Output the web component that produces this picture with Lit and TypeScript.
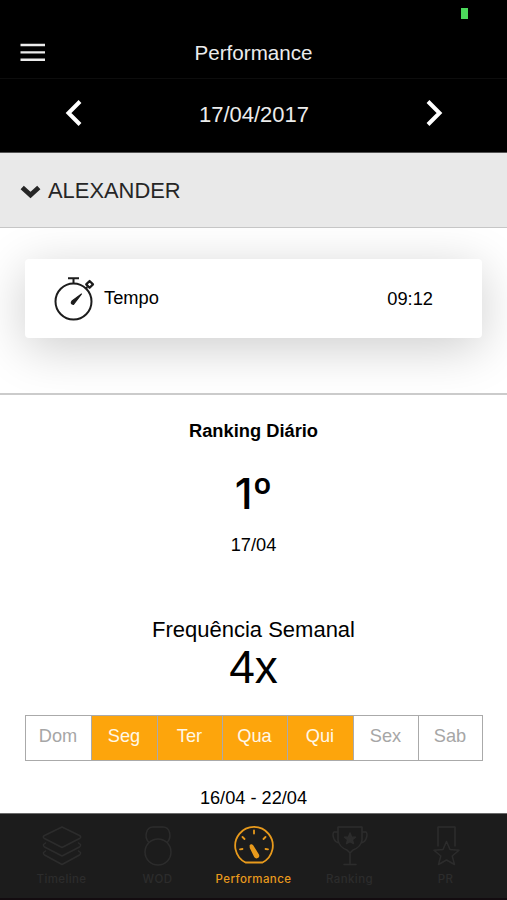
import { LitElement, html, css, svg } from "lit";
import { customElement, property } from "lit/decorators.js";
import { classMap } from "lit/directives/class-map.js";

const icons: Record<string, unknown> = {
  timeline: svg`<path d="M21 2 L38.500 10.500 Q41 12 38.500 13.500 L21 22.500 L3.500 13.500 Q1 12 3.500 10.500 Z"/>
    <path d="M4.500 18 L2.500 19.500 Q2 21 3.500 22 L21 31 L38.500 22 Q40 21 39.500 19.500 L37.500 18"/>
    <path d="M4.500 26 L2.500 27.500 Q2 29 3.500 30 L21 39.500 L38.500 30 Q40 29 39.500 27.500 L37.500 26"/>`,
  wod: svg`<path d="M11.500 17 C7 12 9 2 16 2 H26 C33 2 35 12 30.500 17"/>
    <circle cx="21" cy="27" r="13"/>`,
  performance: svg`<path d="M12.500 37.500 A18.800 18.800 0 1 1 29.500 37.500 Z"/>
    <path d="M21 5.500 V8.500 M9.500 12 L11.500 14 M32.500 12 L30.500 14 M7 24.300 L9.500 24 M35 24.300 L32.500 24"/>
    <path class="solid" d="M17.500 20.500 C18 19.800 19 20 19.600 21 L25.200 30 C26 32 23.300 33.500 22 31.500 L17.600 22.500 Z"/>`,
  ranking: svg`<path d="M9 2 H33 V15 Q32 22 24 25 L21 28 L18 25 Q10 22 9 15 Z M9 7 H5 Q3 9 5 14 Q6 17 10 18 M33 7 H37 Q39 9 37 14 Q36 17 32 18 M21 28 V39 M15 39.500 H27"/>
    <path class="solid" d="M21 8 L22.500 12 L26.500 12.200 L23.300 14.700 L24.400 18.500 L21 16.300 L17.600 18.500 L18.700 14.700 L15.500 12.200 L19.500 12 Z"/>`,
  pr: svg`<path d="M13 21 V2 H30 V21"/>
    <path d="M21.500 16.500 L25 24.500 L34 25.200 L27.200 31 L29.500 39.500 L21.500 35 L13.500 39.500 L15.800 31 L9 25.200 L18 24.500 Z"/>`,
};

@customElement("tab-item")
class TabItem extends LitElement {
  @property() icon = "";
  @property() label = "";
  @property({ type: Boolean, reflect: true }) active = false;

  static styles = css`
    :host {
      display: flex;
      flex-direction: column;
      align-items: center;
      flex: 0 0 96px;
      color: #2c2c2c;
    }
    :host([active]) { color: #e89a1c; }
    svg {
      width: 42px;
      height: 42px;
      fill: none;
      stroke: currentColor;
      stroke-width: 1.500;
      stroke-linejoin: round;
      stroke-linecap: round;
    }
    :host([active]) svg { stroke-width: 1.800; }
    .solid { fill: currentColor; }
    .label {
      font: 500 11.5px/16px Inter, sans-serif;
      letter-spacing: 0.4px;
      margin-top: 4px;
      white-space: nowrap;
    }
  `;

  render() {
    return html`<svg viewBox="0 0 42 42">${icons[this.icon]}</svg>
      <span class="label">${this.label}</span>`;
  }
}

@customElement("app-root")
class AppRoot extends LitElement {
  days = ["Dom", "Seg", "Ter", "Qua", "Qui", "Sex", "Sab"];
  trained = new Set(["Seg", "Ter", "Qua", "Qui"]);

  static styles = css`
    :host {
      display: flex;
      flex-direction: column;
      width: 507px;
      height: 900px;
      overflow: hidden;
      background: #fff;
      color: #000;
      font-family: "Liberation Sans", Arial, sans-serif;
    }
    * { box-sizing: border-box; }
    svg { display: block; flex: none; }
    .status {
      height: 26px;
      flex: none;
      background: #000;
      display: flex;
      justify-content: flex-end;
      padding: 8px 39px 0 0;
    }
    .battery { width: 7px; height: 11px; background: #4cd95c; }
    .title {
      height: 53px;
      flex: none;
      background: #000;
      border-bottom: 1px solid #0d0d0d;
      display: grid;
      grid-template-columns: 60px 1fr 60px;
      align-items: center;
      color: #ececec;
      font-size: 20.6px;
      text-align: center;
    }
    .title span { padding-top: 2px; }
    .menu { margin-left: 20px; }
    .date {
      height: 74px;
      flex: none;
      background: #000;
      border-bottom: 1px solid #555;
      display: flex;
      justify-content: space-between;
      align-items: center;
      padding: 0 64px 5px 65px;
      color: #ececec;
      font-size: 22px;
    }
    .date span { padding-top: 3px; }
    .athlete {
      height: 75px;
      flex: none;
      background: #e9e9e9;
      border-bottom: 1px solid #c6c6c6;
      display: flex;
      align-items: center;
      gap: 7px;
      padding-left: 20px;
      font-size: 21.9px;
      color: #262626;
    }
    .athlete svg { margin-top: 3px; }
    .athlete span { padding-top: 1px; }
    .result {
      height: 167px;
      flex: none;
      padding: 31px 25px 0;
      border-bottom: 2px solid #cbcbcb;
      overflow: hidden;
    }
    .card {
      height: 79px;
      border-radius: 4px;
      background: #fff;
      box-shadow: 0 10px 50px rgba(0, 0, 0, 0.2);
      display: flex;
      align-items: center;
      padding: 0 49px 0 28px;
      font-size: 18.3px;
    }
    .card svg { margin-bottom: 2px; }
    .card .name { margin: 0 0 2px 9px; flex: 1; }
    .stats {
      flex: 1;
      display: flex;
      flex-direction: column;
      align-items: center;
      white-space: nowrap;
    }
    .small { font-size: 18.2px; line-height: 22px; }
    .heading { font-weight: bold; margin-top: 25px; font-size: 18.3px; }
    .place {
      font: 500 43px/52px Inter, sans-serif;
      margin-top: 25px;
    }
    .day { margin-top: 15px; }
    .freq { font-size: 22px; line-height: 26px; margin-top: 61px; }
    .count { font-size: 46px; line-height: 48px; }
    .week {
      width: 458px;
      height: 46px;
      margin-top: 24px;
      border: 1px solid #aaa;
      display: grid;
      grid-template-columns: 65px 66px 65px 65px 66px 65px 1fr;
    }
    .cell {
      display: flex;
      justify-content: center;
      padding-top: 10px;
      font-size: 18.2px;
      line-height: 21px;
      color: #a6a6a6;
      border-left: 1px solid #aaa;
    }
    .cell:first-child { border-left: 0; }
    .cell.on { background: #fda50c; color: #fff8e8; }
    .range { margin-top: 26px; }
    .tabs {
      height: 87px;
      flex: none;
      background: #1c1c1c;
      border-top: 1px solid #6a6a6a;
      border-bottom: 2px solid #130c10;
      display: flex;
      justify-content: center;
      padding-top: 11px;
    }
  `;

  render() {
    return html`
      <div class="status"><div class="battery"></div></div>
      <header class="title">
        <svg class="menu" width="26" height="20" viewBox="0 0 26 20" stroke="#ececec" stroke-width="2.400">
          <path d="M0.500 3 H25 M0.500 10.400 H25 M0.500 17.800 H25" />
        </svg>
        <span>Performance</span>
      </header>
      <div class="date">
        <svg width="17" height="28" viewBox="0 0 17 28" fill="none" stroke="#fff" stroke-width="4">
          <path d="M15 2.500 L3.500 14 L15 25.500" />
        </svg>
        <span>17/04/2017</span>
        <svg width="17" height="28" viewBox="0 0 17 28" fill="none" stroke="#fff" stroke-width="4">
          <path d="M2 2.500 L13.500 14 L2 25.500" />
        </svg>
      </div>
      <div class="athlete">
        <svg width="21" height="14" viewBox="0 0 21 14" fill="none" stroke="#262626" stroke-width="4.800">
          <path d="M2.200 2.500 L10.500 10 L18.800 2.500" />
        </svg>
        <span>ALEXANDER</span>
      </div>
      <section class="result">
        <div class="card">
          <svg width="42" height="46" viewBox="0 0 42 46" fill="none" stroke="#1c1c1c" stroke-width="2">
            <circle cx="20.500" cy="26.500" r="18" />
            <path d="M15 3.300 H26 M20.500 3.300 V8.500 M32.500 14 L34.300 12" />
            <path d="M36.600 6 L40 9.400 L36.600 12.800 L33.200 9.400 Z" stroke-width="2.200" stroke-linejoin="round" />
            <path d="M28.500 19 L19 26 Q17 29 20.500 29.300 Z" fill="#1c1c1c" stroke-width="1.200" stroke-linejoin="round" />
          </svg>
          <span class="name">Tempo</span>
          <span>09:12</span>
        </div>
      </section>
      <section class="stats">
        <div class="small heading">Ranking Diário</div>
        <div class="place">1º</div>
        <div class="small day">17/04</div>
        <div class="freq">Frequência Semanal</div>
        <div class="count">4x</div>
        <div class="week">
          ${this.days.map(
            (d) => html`<div class=${classMap({ cell: true, on: this.trained.has(d) })}>${d}</div>`
          )}
        </div>
        <div class="small range">16/04 - 22/04</div>
      </section>
      <nav class="tabs">
        <tab-item icon="timeline" label="Timeline"></tab-item>
        <tab-item icon="wod" label="WOD"></tab-item>
        <tab-item icon="performance" label="Performance" active></tab-item>
        <tab-item icon="ranking" label="Ranking"></tab-item>
        <tab-item icon="pr" label="PR"></tab-item>
      </nav>
    `;
  }
}
